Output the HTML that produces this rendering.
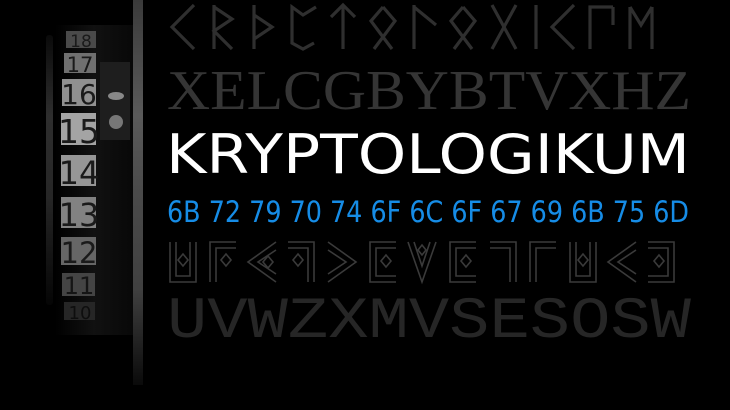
<!DOCTYPE html>
<html><head><meta charset="utf-8"><style>
html,body{margin:0;padding:0;background:#000;width:730px;height:410px;overflow:hidden}
svg{display:block}
</style></head><body>
<svg width="730" height="410" viewBox="0 0 730 410" xmlns="http://www.w3.org/2000/svg">
<defs>
<linearGradient id="strip" x1="0" y1="0" x2="0" y2="1">
<stop offset="0" stop-color="#3a3a3a"/><stop offset="0.3" stop-color="#5a5a5a"/><stop offset="0.5" stop-color="#4a4a4a"/><stop offset="0.75" stop-color="#404040"/><stop offset="1" stop-color="#0a0a0a"/>
</linearGradient>
<linearGradient id="body" x1="0" y1="0" x2="1" y2="0">
<stop offset="0" stop-color="#000"/><stop offset="0.5" stop-color="#111"/><stop offset="1" stop-color="#080808"/>
</linearGradient>
<linearGradient id="rim" x1="0" y1="0" x2="0" y2="1">
<stop offset="0" stop-color="#0a0a0a"/><stop offset="0.3" stop-color="#2e2e2e"/><stop offset="0.6" stop-color="#262626"/><stop offset="1" stop-color="#050505"/>
</linearGradient>
</defs>
<rect width="730" height="410" fill="#000"/>
<rect x="55" y="25" width="78" height="310" fill="url(#body)"/>
<rect x="46" y="35" width="7" height="270" fill="url(#rim)" rx="3"/>
<rect x="100" y="62" width="30" height="78" fill="#1e1e1e"/>
<ellipse cx="116" cy="96" rx="8" ry="4" fill="#888"/>
<circle cx="116" cy="122" r="7" fill="#777"/>
<rect x="133" y="0" width="10" height="385" fill="url(#strip)"/>
<g font-family="'DejaVu Sans','Liberation Sans',sans-serif" text-anchor="middle">
<rect x="66" y="31" width="30" height="17" fill="#4a4a4a"/><text x="81" y="47" font-size="17" fill="#1a1a1a">18</text>
<rect x="64" y="53" width="32" height="20" fill="#707070"/><text x="80" y="72" font-size="21" fill="#1a1a1a">17</text>
<rect x="62" y="79" width="34" height="27" fill="#909090"/><text x="79" y="104" font-size="28" fill="#1a1a1a">16</text>
<rect x="61" y="113" width="35" height="32" fill="#a4a4a4"/><text x="79" y="143" font-size="33" fill="#1a1a1a">15</text>
<rect x="61" y="155" width="35" height="31" fill="#969696"/><text x="79" y="184" font-size="32" fill="#1a1a1a">14</text>
<rect x="61" y="197" width="35" height="31" fill="#828282"/><text x="79" y="226" font-size="32" fill="#1a1a1a">13</text>
<rect x="61" y="237" width="35" height="28" fill="#666"/><text x="79" y="263" font-size="29" fill="#1a1a1a">12</text>
<rect x="62" y="273" width="33" height="23" fill="#444"/><text x="79" y="294" font-size="24" fill="#151515">11</text>
<rect x="64" y="302" width="31" height="18" fill="#262626"/><text x="80" y="319" font-size="18" fill="#0e0e0e">10</text>
</g>
<g stroke="#2f2f2f" stroke-width="3.2" fill="none">
<g transform="translate(168,3)"><path d="M26 2 L4 24 L26 46"/></g>
<g transform="translate(208,3)"><path d="M6 2 V46 M6 4 L24 16 L6 28 L24 46"/></g>
<g transform="translate(248,3)"><path d="M6 2 V46 M6 12 L24 24 L6 36"/></g>
<g transform="translate(288,3)"><path d="M28 4 L15 12 L4 4 V40 L15 46 L26 40"/></g>
<g transform="translate(328,3)"><path d="M15 2 V46 M3 14 L15 2 L27 14"/></g>
<g transform="translate(368,3)"><path d="M15 4 L27 18 L6 46 M15 4 L3 18 L24 46"/></g>
<g transform="translate(408,3)"><path d="M6 2 V46 M6 4 L28 22"/></g>
<g transform="translate(448,3)"><path d="M15 4 L27 18 L6 46 M15 4 L3 18 L24 46"/></g>
<g transform="translate(488,3)"><path d="M4 2 L28 46 M28 2 L4 46"/></g>
<g transform="translate(528,3)"><path d="M8 2 V46"/></g>
<g transform="translate(548,3)"><path d="M26 2 L4 24 L26 46"/></g>
<g transform="translate(585,3)"><path d="M5 46 V4 H28 M28 4 V22"/></g>
<g transform="translate(625,3)"><path d="M5 46 V4 M27 46 V4 M5 4 L16 22 L27 4"/></g>
</g>
<text x="167" y="109" font-family="'Liberation Serif',serif" font-size="56" fill="#353535" textLength="524" lengthAdjust="spacingAndGlyphs">XELCGBYBTVXHZ</text>
<text x="166" y="173" font-family="'DejaVu Sans','Liberation Sans',sans-serif" font-size="54" fill="#fff" textLength="524" lengthAdjust="spacingAndGlyphs">KRYPTOLOGIKUM</text>
<text x="167" y="222" font-family="'DejaVu Sans','Liberation Sans',sans-serif" font-size="29" fill="#168ce6" textLength="522" lengthAdjust="spacingAndGlyphs">6B 72 79 70 74 6F 6C 6F 67 69 6B 75 6D</text>
<g stroke="#3a3a3a" stroke-width="1.6" fill="none">
<g transform="translate(168,242)"><path d="M2 0 V40 H28 V0 M8 0 V34 H22 V0"/><path d="M15 12 L20 18 L15 24 L10 18Z"/></g>
<g transform="translate(208,242)"><path d="M2 40 V0 H28 M8 40 V6 H28"/><path d="M18 12 L23 18 L18 24 L13 18Z"/></g>
<g transform="translate(246,242)"><path d="M30 0 L2 20 L30 40 M30 8 L12 20 L30 32"/><path d="M22 14 L27 20 L22 26 L17 20Z"/></g>
<g transform="translate(286,242)"><path d="M2 0 H28 V40 M2 6 H22 V40"/><path d="M12 12 L17 18 L12 24 L7 18Z"/></g>
<g transform="translate(326,242)"><path d="M2 0 L30 20 L2 40 M2 8 L20 20 L2 32"/></g>
<g transform="translate(368,242)"><path d="M28 0 H2 V40 H28 M28 6 H8 V34 H28"/><path d="M18 13 L23 19 L18 25 L13 19Z"/></g>
<g transform="translate(406,242)"><path d="M2 0 L16 40 L30 0 M8 0 L16 24 L24 0"/><path d="M16 3 L20 8 L16 13 L12 8Z"/></g>
<g transform="translate(448,242)"><path d="M28 0 H2 V40 H28 M28 6 H8 V34 H28"/><path d="M18 13 L23 19 L18 25 L13 19Z"/></g>
<g transform="translate(488,242)"><path d="M2 0 H28 V40 M2 6 H22 V40"/></g>
<g transform="translate(528,242)"><path d="M2 40 V0 H28 M8 40 V6 H28"/></g>
<g transform="translate(568,242)"><path d="M2 0 V40 H28 V0 M8 0 V34 H22 V0"/><path d="M15 12 L20 18 L15 24 L10 18Z"/></g>
<g transform="translate(606,242)"><path d="M30 0 L2 20 L30 40 M30 8 L12 20 L30 32"/></g>
<g transform="translate(646,242)"><path d="M2 0 H28 V40 H2 M2 6 H22 V34 H2"/><path d="M13 13 L18 19 L13 25 L8 19Z"/></g>
</g>
<text x="167" y="337" font-family="'Liberation Mono',monospace" font-size="58" fill="#262626" textLength="524" lengthAdjust="spacingAndGlyphs">UVWZXMVSESOSW</text>
</svg>
</body></html>
